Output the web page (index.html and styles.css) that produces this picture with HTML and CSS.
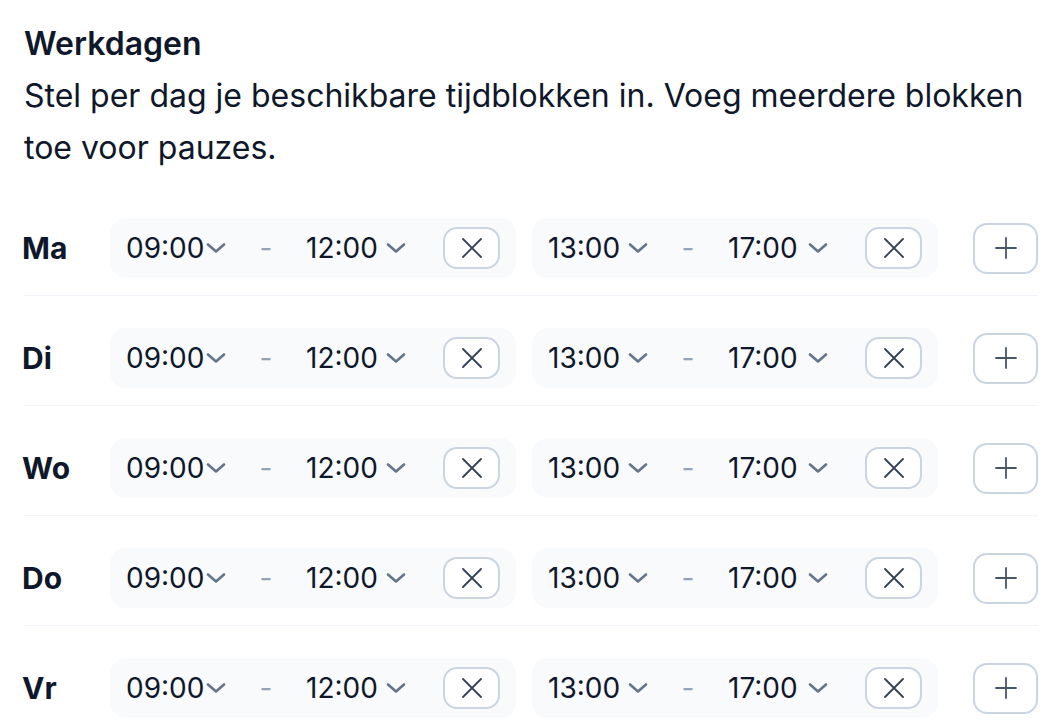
FILE: index.html
```html
<!DOCTYPE html>
<html lang="nl">
<head>
  <meta charset="UTF-8" />
  <meta name="viewport" content="width=device-width, initial-scale=1.0"/>
  <title>Werkdagen</title>
  <link rel="stylesheet" href="styles.css">
</head>
<body>

<h1>Werkdagen</h1>
<p class="intro">Stel per dag je beschikbare tijdblokken in. Voeg meerdere blokken toe voor pauzes.</p>

<div id="days"></div>

<script>
  const days = ["Ma", "Di", "Wo", "Do", "Vr"];
  const blocks = [["09:00", "12:00"], ["13:00", "17:00"]];

  const chevron = '<svg width="20" height="10" viewBox="0 0 20 10"><path d="M2 1.5l8 7 8-7" fill="none" stroke="#64748b" stroke-width="2.6" stroke-linecap="round" stroke-linejoin="round"/></svg>';
  const cross = '<svg width="20" height="20" viewBox="0 0 20 20"><path d="M1 1l18 18M19 1L1 19" stroke="#334155" stroke-width="1.8" stroke-linecap="round"/></svg>';
  const plus = '<svg width="22" height="22" viewBox="0 0 22 22"><path d="M11 1v20M1 11h20" stroke="#475569" stroke-width="1.8" stroke-linecap="round"/></svg>';

  const list = document.getElementById("days");

  days.forEach(day => {
    const row = document.createElement("div");
    row.className = "day-row";

    let html = `<span class="day">${day}</span>`;
    blocks.forEach(b => {
      html += `
        <div class="block">
          <div class="time">${b[0]}${chevron}</div>
          <span class="dash">-</span>
          <div class="time">${b[1]}${chevron}</div>
          <button class="remove">${cross}</button>
        </div>`;
    });
    html += `<button class="add">${plus}</button>`;

    row.innerHTML = html;
    list.appendChild(row);
  });
</script>

</body>
</html>
```

FILE: styles.css
```css
body {
  margin: 0;
  padding: 24px;
  font-family: Inter, "Noto Sans", sans-serif;
  color: #0f172a;
  background: #fff;
}

h1 {
  margin: 0;
  font-size: 32px;
  font-weight: 600;
  line-height: 40px;
}

.intro {
  margin: 6px 0 28px;
  font-size: 32px;
  line-height: 52px;
}

.day-row {
  display: flex;
  align-items: center;
  padding: 16px 0 17px;
  margin-bottom: 16px;
  border-bottom: 1px solid #f1f5f9;
}

.day {
  width: 88px;
  margin-left: -2px;
  font-size: 30px;
  font-weight: 700;
}

.block {
  display: flex;
  align-items: center;
  width: 406px;
  height: 60px;
  box-sizing: border-box;
  padding: 0 16px;
  margin-right: 16px;
  background: #f8fafc;
  border-radius: 16px;
}

.time {
  display: flex;
  align-items: center;
  justify-content: space-between;
  width: 100px;
  font-size: 28px;
}

.dash {
  width: 80px;
  text-align: center;
  font-size: 28px;
  color: #94a3b8;
}

.remove,
.add {
  display: flex;
  align-items: center;
  justify-content: center;
  padding: 0;
  background: #fff;
  border: 2px solid #cbd5e1;
  border-radius: 14px;
}

.remove {
  margin-left: auto;
  width: 57px;
  height: 42px;
}

.add {
  margin-left: auto;
  width: 65px;
  height: 51px;
}
```
